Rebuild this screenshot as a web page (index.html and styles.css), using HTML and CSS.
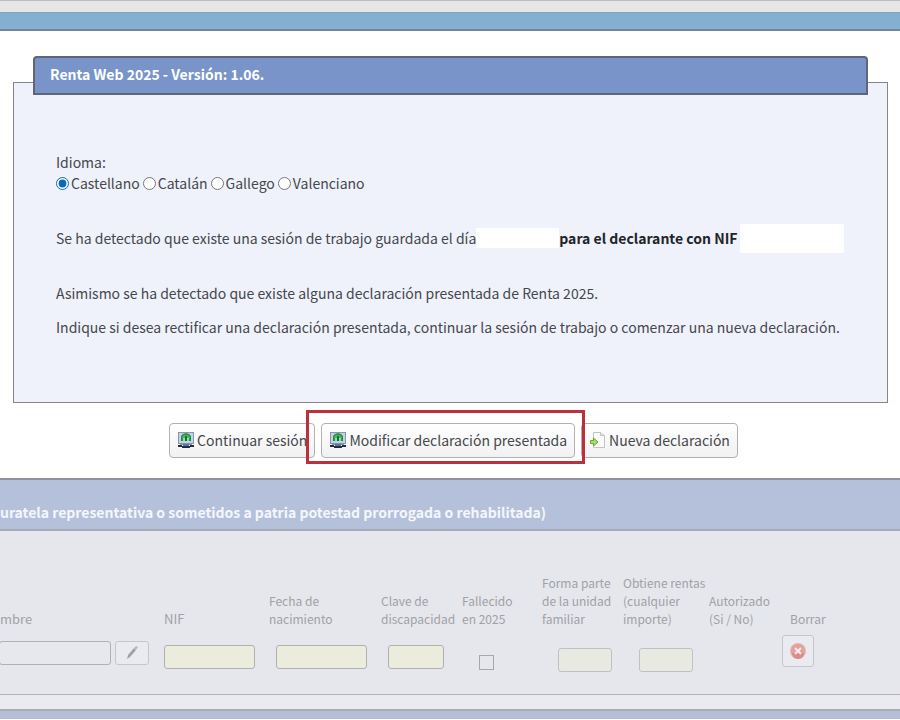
FILE: index.html
```html
<!DOCTYPE html>
<html lang="es">
<head>
<meta charset="utf-8">
<title>Renta Web 2025</title>
<link rel="stylesheet" href="styles.css">
</head>
<body>
<svg class="defs" aria-hidden="true">
  <symbol id="terminal" viewBox="0 0 16 16">
    <path fill="#8797ad" d="M0 0h16v12H0z"/>
    <path fill="#c3d2e0" d="M1 1h14v10H1z"/>
    <path fill="#2c8a4c" d="M3 9V4l2-2 3-1 3 1 2 2v5H3z"/>
    <path fill="#45b861" d="M4 5l2-2h4l2 2v1H4z"/>
    <path fill="#8ae698" d="M5 6h2v3H5zM9 6h2v3H9z"/>
    <path fill="#1d6b3c" d="M7 4h2v5H7z"/>
    <path fill="#8494ab" d="M2 11h12v2H2z"/>
    <path fill="#252d3c" d="M0 13h4v2H0zM12 13h4v2h-4zM4 14h8v2H4z"/>
    <path fill="#5a74aa" d="M5 12h6v2H5z"/>
  </symbol>
</svg>
<div class="top-strip"></div>
<div class="blue-bar"></div>
<main class="dialog">
  <section class="panel">
    <h1 class="panel-title">Renta Web 2025 - Versión: 1.06.</h1>
    <div class="panel-body">
      <div class="languages" role="radiogroup" aria-labelledby="idioma">
        <div id="idioma" class="languages-title">Idioma:</div>
        <div class="options">
          <label><input type="radio" name="lang" checked>Castellano</label>
          <label><input type="radio" name="lang">Catalán</label>
          <label><input type="radio" name="lang">Gallego</label>
          <label><input type="radio" name="lang">Valenciano</label>
        </div>
      </div>
      <p class="session">Se ha detectado que existe una sesión de trabajo guardada el día<span class="blank-date"></span><strong>para el declarante con NIF</strong><span class="blank-nif"></span></p>
      <p class="filed">Asimismo se ha detectado que existe alguna declaración presentada de Renta 2025.</p>
      <p>Indique si desea rectificar una declaración presentada, continuar la sesión de trabajo o comenzar una nueva declaración.</p>
    </div>
  </section>
  <div class="actions">
    <button class="action" type="button"><svg class="icon"><use href="#terminal"/></svg>Continuar sesión</button>
    <div class="marked"><button class="action" type="button"><svg class="icon"><use href="#terminal"/></svg>Modificar declaración presentada</button></div>
    <button class="action" type="button"><svg class="icon" viewBox="0 0 16 16"><path fill="#fbfbfb" stroke="#c2c2c2" d="M3.500.5h7l4 3v12h-11z"/><path fill="#e2e2e2" stroke="#c2c2c2" d="M10.500.5v3h4"/><path fill="#a5e066" stroke="#62a838" d="M.5 8.500h3V6L8 10l-4.500 4v-2.500h-3z"/></svg>Nueva declaración</button>
  </div>
</main>
<section class="section">
  <h2 class="section-title">uratela representativa o sometidos a patria potestad prorrogada o rehabilitada)</h2>
  <div class="section-body">
    <table class="people">
      <colgroup><col class="c-name"><col class="c-nif"><col class="c-date"><col class="c-key"><col class="c-dead"><col class="c-key"><col class="c-income"><col class="c-key"><col></colgroup>
      <thead>
        <tr>
          <th class="large" id="h-name">mbre</th>
          <th class="large" id="h-nif">NIF</th>
          <th id="h-date">Fecha de<br>nacimiento</th>
          <th id="h-key">Clave de<br>discapacidad</th>
          <th id="h-dead">Fallecido<br>en 2025</th>
          <th id="h-unit">Forma parte<br>de la unidad<br>familiar</th>
          <th id="h-income">Obtiene rentas<br>(cualquier<br>importe)</th>
          <th id="h-auth">Autorizado<br>(Si / No)</th>
          <th>Borrar</th>
        </tr>
      </thead>
      <tbody>
        <tr>
          <td><div class="name-cell"><input class="field name" type="text" aria-labelledby="h-name"><button class="edit" type="button" aria-label="Editar"><svg class="pencil" viewBox="0 0 16 16"><path fill="#a0a0a3" d="M3 14l1-4 6-7 2 2-6 7z"/><path fill="#b9b9bc" d="M10 3l2-2 2 1-2 3z"/></svg></button></div></td>
          <td><input class="field medium" type="text" aria-labelledby="h-nif"></td>
          <td><input class="field medium indent" type="text" aria-labelledby="h-date"></td>
          <td><input class="field short indent" type="text" aria-labelledby="h-key"></td>
          <td><input class="check" type="checkbox" aria-labelledby="h-dead"></td>
          <td><input class="field tiny" type="text" aria-labelledby="h-unit"></td>
          <td><input class="field tiny" type="text" aria-labelledby="h-income"></td>
          <td></td>
          <td><button class="remove" type="button" aria-label="Borrar"><svg class="icon" viewBox="0 0 16 16"><circle cx="8" cy="8" r="8" fill="#e3b5b2"/><circle cx="8" cy="8" r="7" fill="#e2a19c"/><path fill="#d98c88" d="M2 10h12a6 6 0 0 1-12 0z"/><path d="M5 5l6 6M11 5l-6 6" stroke="#f6ebea" stroke-width="2"/></svg></button></td>
        </tr>
      </tbody>
    </table>
  </div>
  <div class="section-foot"></div>
</section>
<div class="next-bar"></div>
</body>
</html>
```

FILE: styles.css
```css
* { box-sizing: border-box; }
body {
  margin: 0;
  background: #fff;
  color: #45474c;
  font: 14px/20px "Noto Sans CJK SC", "Noto Sans", sans-serif;
  overflow-x: hidden;
}
h1, h2, p { margin: 0; }
input, button { font: inherit; color: inherit; margin: 0; }
.defs { position: absolute; width: 0; height: 0; }
.top-strip { height: 12px; background: #e6e6e7; border-top: 1px solid #bcbcbe; }
.blue-bar { height: 17px; background: #83b0d0; border-top: 1px solid #7ca4be; }
.dialog {
  background: #fff;
  border-top: 2px solid #71879b;
  border-bottom: 2px solid #8e909a;
  padding: 51px 12px 20px 13px;
}
.panel { background: #eff2fb; border: 1px solid #82858c; }
.panel-title {
  margin: -27px 19px 0;
  padding: 6px 15px 9px;
  border: 2px solid #5f6678;
  border-radius: 4px 4px 0 0;
  background: #7994c8;
  color: #fff;
  font-size: 14px;
  line-height: 20px;
  font-weight: 700;
}
.panel-body { padding: 57px 40px 65px 42px; white-space: nowrap; }
.options { display: flex; line-height: 22px; }
.options label { display: flex; align-items: center; gap: 2px; padding-right: 3px; }
.options input { width: 13px; height: 13px; accent-color: #0b6bb5; }
.languages { margin-bottom: 29px; }
.session { display: flex; align-items: center; height: 30px; margin-bottom: 30px; }
.session strong { color: #222429; }
.blank-date { width: 83px; height: 20px; background: #fff; }
.blank-nif { width: 104px; height: 29px; background: #fff; margin-left: 3px; }
.filed { margin-bottom: 14px; }
.actions { display: flex; justify-content: center; gap: 6px; margin: 20px 0 0 6px; }
.action {
  display: flex;
  align-items: center;
  gap: 3px;
  height: 35px;
  padding: 0 7px 2px 8px;
  border: 1px solid #b1b1b4;
  border-radius: 4px;
  background: linear-gradient(#fff, #f1f1f1);
  white-space: nowrap;
}
.icon { display: block; width: 16px; height: 16px; }
.marked { position: relative; }
.marked::after {
  content: "";
  position: absolute;
  z-index: 1;
  inset: -13px -10px -6px -15px;
  border: 3px solid #bd2f3c;
  pointer-events: none;
}
.section-title {
  padding: 22px 0 7px;
  background: #b5c1da;
  border-bottom: 2px solid #a5aab6;
  color: #f4f6fb;
  font-size: 14px;
  line-height: 20px;
  white-space: nowrap;
}
.section-body { background: #e6e7ec; border-bottom: 1px solid #b3b5ba; padding-top: 43px; height: 164px; }
.section-foot { height: 16px; background: #ebebef; border-bottom: 2px solid #a9adb5; }
.next-bar { height: 8px; background: #b6bfd8; }
.people { width: 100%; table-layout: fixed; border-collapse: collapse; color: #a0a1a5; }
.people th { padding: 0; vertical-align: bottom; text-align: left; font-size: 12px; line-height: 18px; font-weight: 400; white-space: nowrap; }
.people .large { font-size: 13px; }
.people td { padding: 13px 0 0; vertical-align: top; height: 60px; }
.c-name { width: 164px; }
.c-nif { width: 105px; }
.c-date { width: 112px; }
.c-key { width: 81px; }
.c-dead { width: 80px; }
.c-income { width: 86px; }
.name-cell { display: flex; gap: 4px; }
.field { display: block; height: 24px; background: #ebecdc; border: 1px solid #afb1b2; border-radius: 3px; margin-top: 4px; }
.name { width: 112px; margin: 0 0 0 -1px; background: #e7e8ed; }
.medium { width: 91px; }
.short { width: 56px; }
.indent { margin-left: 7px; }
.tiny { width: 54px; margin: 7px 0 0 16px; background: #e8eae2; border-color: #bfc1c4; }
.edit, .remove { display: flex; align-items: center; justify-content: center; padding: 0; border: 1px solid #c5c6cb; border-radius: 3px; background: #eaebf0; }
.edit { width: 34px; height: 24px; }
.pencil { width: 16px; height: 16px; }
.check { display: block; appearance: none; width: 15px; height: 15px; border: 1px solid #a7a8ab; margin: 14px 0 0 17px; }
.people td:last-child { padding-top: 7px; }
.remove { width: 32px; height: 32px; margin-left: -8px; }
```
